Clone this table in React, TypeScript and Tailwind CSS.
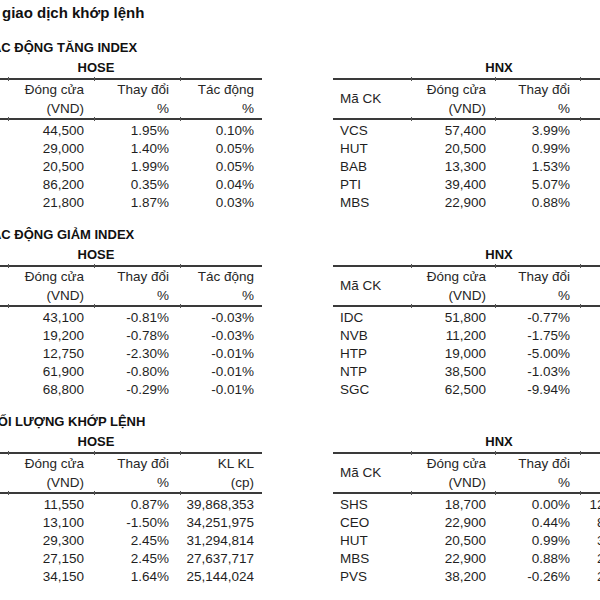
import React from "react";

type Table = {
  title: string;
  cols: string[];
  widths: string[];
  head: [string, string][];
  rows: string[][];
};

const HOSE_COLS = ["w-[78px] pl-[7px] text-left", "w-[86px] pr-[10px] text-right", "w-[86px] pr-[11px] text-right", "w-[82px] pr-[8px] text-right"];
const HOSE_W = ["w-[78px]", "w-[86px]", "w-[86px]", "w-[82px]"];
const HNX_COLS = ["w-[78px] pl-[7px] text-left", "w-[84px] pr-[9px] text-right", "w-[85px] pr-[10px] text-right", "w-[85px] pr-[8px] text-right"];
const HNX_W = ["w-[78px]", "w-[84px]", "w-[85px]", "w-[85px]"];

const impactHead: [string, string][] = [
  ["Đóng cửa", "(VND)"],
  ["Thay đổi", "%"],
  ["Tác động", "%"],
];
const volumeHead: [string, string][] = [
  ["Đóng cửa", "(VND)"],
  ["Thay đổi", "%"],
  ["KL KL", "(cp)"],
];

const sections: { title: string; shift: string; hose: string[][]; hnx: string[][]; head: [string, string][] }[] = [
  {
    title: "TÁC ĐỘNG TĂNG INDEX",
    shift: "ml-[-16px]",
    head: impactHead,
    hose: [
      ["", "44,500", "1.95%", "0.10%"],
      ["", "29,000", "1.40%", "0.05%"],
      ["", "20,500", "1.99%", "0.05%"],
      ["", "86,200", "0.35%", "0.04%"],
      ["", "21,800", "1.87%", "0.03%"],
    ],
    hnx: [
      ["VCS", "57,400", "3.99%", "0.31%"],
      ["HUT", "20,500", "0.99%", "0.07%"],
      ["BAB", "13,300", "1.53%", "0.06%"],
      ["PTI", "39,400", "5.07%", "0.05%"],
      ["MBS", "22,900", "0.88%", "0.04%"],
    ],
  },
  {
    title: "TÁC ĐỘNG GIẢM INDEX",
    shift: "ml-[-16px]",
    head: impactHead,
    hose: [
      ["", "43,100", "-0.81%", "-0.03%"],
      ["", "19,200", "-0.78%", "-0.03%"],
      ["", "12,750", "-2.30%", "-0.01%"],
      ["", "61,900", "-0.80%", "-0.01%"],
      ["", "68,800", "-0.29%", "-0.01%"],
    ],
    hnx: [
      ["IDC", "51,800", "-0.77%", "-0.07%"],
      ["NVB", "11,200", "-1.75%", "-0.05%"],
      ["HTP", "19,000", "-5.00%", "-0.04%"],
      ["NTP", "38,500", "-1.03%", "-0.03%"],
      ["SGC", "62,500", "-9.94%", "-0.03%"],
    ],
  },
  {
    title: "KHỐI LƯỢNG KHỚP LỆNH",
    shift: "ml-[-21px]",
    head: volumeHead,
    hose: [
      ["", "11,550", "0.87%", "39,868,353"],
      ["", "13,100", "-1.50%", "34,251,975"],
      ["", "29,300", "2.45%", "31,294,814"],
      ["", "27,150", "2.45%", "27,637,717"],
      ["", "34,150", "1.64%", "25,144,024"],
    ],
    hnx: [
      ["SHS", "18,700", "0.00%", "12,437,100"],
      ["CEO", "22,900", "0.44%", "8,215,300"],
      ["HUT", "20,500", "0.99%", "3,904,600"],
      ["MBS", "22,900", "0.88%", "2,871,200"],
      ["PVS", "38,200", "-0.26%", "2,655,900"],
    ],
  },
];

const Rule = ({ widths }: { widths: string[] }) => (
  <div className="flex h-[2px] bg-[#3a3a3a]">
    {widths.map((w, i) => (
      <div key={i} className={`${w} relative`}>
        {i > 0 && <span className="absolute left-0 top-[-1px] h-[4px] w-px bg-[#555]" />}
      </div>
    ))}
  </div>
);

const DataTable = ({ t }: { t: Table }) => (
  <div className="w-[332px] shrink-0">
    <div className="h-[20px] leading-[20px] text-center text-[13px] font-bold text-[#111]">{t.title}</div>
    <Rule widths={t.widths} />
    <div className="flex text-[13.5px] text-[#262626]">
      <div className={`${t.cols[0]} h-[38px] flex items-center`}>Mã CK</div>
      {t.head.map((h, i) => (
        <div key={i} className={t.cols[i + 1]}>
          <div className="h-[19px] leading-[19px] whitespace-nowrap">{h[0]}</div>
          <div className="h-[19px] leading-[19px] whitespace-nowrap">{h[1]}</div>
        </div>
      ))}
    </div>
    <Rule widths={t.widths} />
    <div className="pt-[2px] text-[13.5px] text-[#1f1f1f]">
      {t.rows.map((r, ri) => (
        <div key={ri} className="flex h-[18px] leading-[18px]">
          {r.map((c, ci) => (
            <div key={ci} className={`${t.cols[ci]} whitespace-nowrap`}>{c}</div>
          ))}
        </div>
      ))}
    </div>
  </div>
);

export default function App() {
  return (
    <div className="w-[600px] h-[600px] overflow-hidden bg-white font-['Liberation_Sans',Arial,sans-serif]">
      <div className="pt-[3px] pl-[2px] h-[23px] leading-[20px] text-[15px] font-bold text-[#111] whitespace-nowrap">
        giao dịch khớp lệnh
      </div>
      <div className="pt-[15px]">
        {sections.map((s, i) => (
          <div key={i} className="h-[187px]">
            <div className={`${s.shift} h-[20px] leading-[20px] text-[13px] font-bold text-[#111] whitespace-nowrap`}>
              {s.title}
            </div>
            <div className="flex ml-[-70px] gap-[71px]">
              <DataTable t={{ title: "HOSE", cols: HOSE_COLS, widths: HOSE_W, head: s.head, rows: s.hose }} />
              <DataTable t={{ title: "HNX", cols: HNX_COLS, widths: HNX_W, head: s.head, rows: s.hnx }} />
            </div>
          </div>
        ))}
      </div>
    </div>
  );
}
